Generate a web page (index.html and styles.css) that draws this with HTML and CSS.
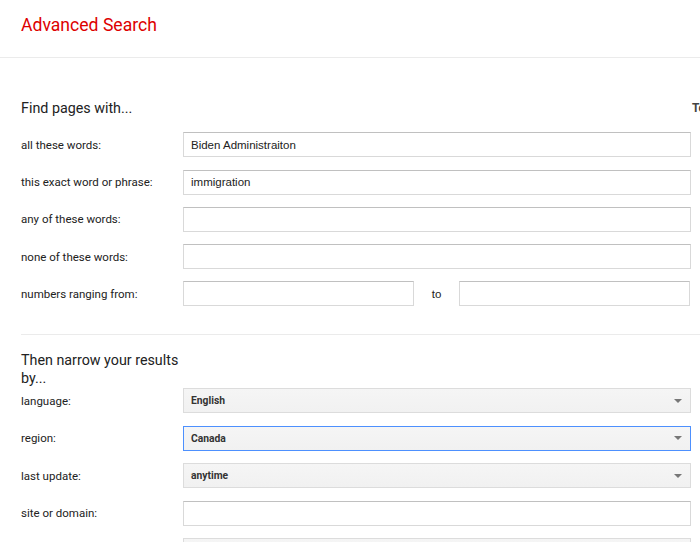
FILE: index.html
```html
<!DOCTYPE html>
<html>
<head>
<meta charset="utf-8">
<title>Advanced Search</title>
<link rel="stylesheet" href="styles.css">
</head>
<body>
<header class="topbar">
  <h1 class="title">Advanced Search</h1>
</header>
<main class="page">
  <section class="section first">
    <div class="row head-row">
      <h2 class="section-title">Find pages with...</h2>
      <div class="spacer"></div>
      <div class="hint">To do this in the search box.</div>
    </div>
    <div class="row">
      <div class="label">all these words:</div>
      <div class="field"><span>Biden Administraiton</span></div>
    </div>
    <div class="row">
      <div class="label">this exact word or phrase:</div>
      <div class="field"><span>immigration</span></div>
    </div>
    <div class="row">
      <div class="label">any of these words:</div>
      <div class="field"></div>
    </div>
    <div class="row">
      <div class="label">none of these words:</div>
      <div class="field"></div>
    </div>
    <div class="row">
      <div class="label">numbers ranging from:</div>
      <div class="range">
        <div class="field"></div>
        <div class="to">to</div>
        <div class="field"></div>
      </div>
    </div>
  </section>
  <hr class="divider">
  <section class="section second">
    <h2 class="section-title narrow">Then narrow your results by...</h2>
    <div class="row">
      <div class="label">language:</div>
      <div class="select"><span>English</span><i class="caret"></i></div>
    </div>
    <div class="row">
      <div class="label">region:</div>
      <div class="select focused"><span>Canada</span><i class="caret"></i></div>
    </div>
    <div class="row">
      <div class="label">last update:</div>
      <div class="select"><span>anytime</span><i class="caret"></i></div>
    </div>
    <div class="row">
      <div class="label">site or domain:</div>
      <div class="field"></div>
    </div>
    <div class="row">
      <div class="label"></div>
      <div class="select"></div>
    </div>
  </section>
</main>
</body>
</html>
```
FILE: styles.css
```css
html, body {
  margin: 0;
  padding: 0;
  background: #fff;
}
body {
  width: 700px;
  height: 542px;
  overflow: hidden;
  font-family: Roboto, "Liberation Sans", Arial, sans-serif;
  color: #222;
}
.topbar {
  height: 58px;
  border-bottom: 1px solid #ebebeb;
  box-sizing: border-box;
  padding: 14px 0 0 21px;
}
.title {
  margin: 0;
  font-size: 17.6px;
  line-height: 22px;
  font-weight: 400;
  color: #dd0000;
}
.page {
  padding-left: 21px;
}
.section.first {
  padding-top: 37px;
  padding-bottom: 28px;
}
.row {
  display: flex;
  align-items: center;
  height: 25px;
  margin-bottom: 12.25px;
  white-space: nowrap;
}
.row:last-child {
  margin-bottom: 0;
}
.label {
  width: 162px;
  flex: none;
  font-size: 11.5px;
  color: #222;
}
.section-title {
  margin: 0;
  font-size: 14.3px;
  font-weight: 400;
  color: #222;
  line-height: 18px;
}
.head-row .section-title {
  width: 162px;
  flex: none;
}
.spacer {
  width: 509px;
  flex: none;
}
.hint {
  font-size: 12px;
  font-weight: 700;
  color: #444;
}
.field {
  width: 508px;
  height: 25px;
  box-sizing: border-box;
  flex: none;
  border: 1px solid #d9d9d9;
  border-top-color: #c0c0c0;
  background: #fff;
  display: flex;
  align-items: center;
  padding-left: 7px;
  font-family: "Liberation Sans", Arial, sans-serif;
  font-size: 11.5px;
  color: #222;
}
.range {
  display: flex;
  align-items: center;
  width: 508px;
}
.range .field {
  width: 231px;
}
.to {
  width: 45px;
  text-align: center;
  font-family: "Liberation Sans", Arial, sans-serif;
  font-size: 11.5px;
  color: #222;
}
.divider {
  margin: 0;
  border: 0;
  border-top: 1px solid #ebebeb;
}
.section.second {
  padding-top: 16px;
}
.narrow {
  width: 175px;
  margin-bottom: 1px;
}
.select {
  width: 508px;
  height: 25px;
  box-sizing: border-box;
  flex: none;
  border: 1px solid #dcdcdc;
  background: linear-gradient(#f5f5f5, #f1f1f1);
  display: flex;
  align-items: center;
  justify-content: space-between;
  padding: 0 7px 0 7px;
  font-size: 10.3px;
  font-weight: 700;
  color: #333;
}
.section.second .row {
  margin-bottom: 12.5px;
}
.select.focused {
  border-color: #4d90fe;
}
.caret {
  width: 0;
  height: 0;
  border-left: 4px solid transparent;
  border-right: 4px solid transparent;
  border-top: 4px solid #777;
  margin-right: 1px;
}
```
